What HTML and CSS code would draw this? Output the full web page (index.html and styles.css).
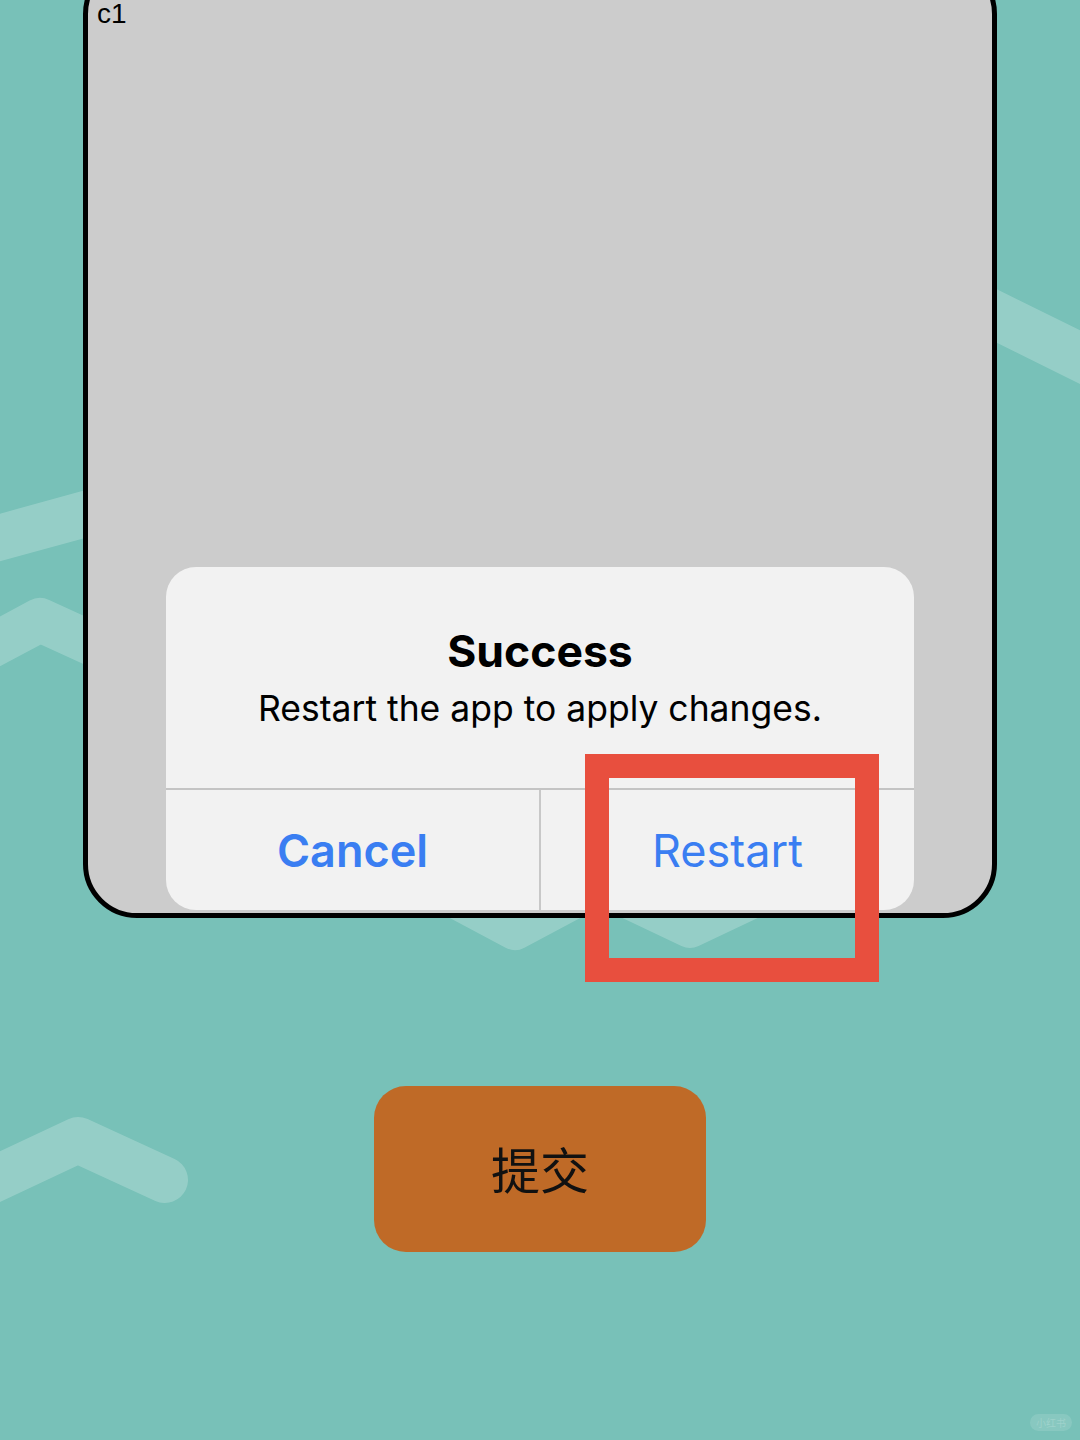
FILE: index.html
```html
<!DOCTYPE html>
<html lang="en">
<head>
  <meta charset="UTF-8">
  <title>Restart dialog</title>
  <link rel="stylesheet" href="styles.css">
</head>
<body>
  <svg class="bg" viewBox="0 0 1080 1440" width="1080" height="1440">
    <g fill="none" stroke="#ffffff" stroke-opacity="0.22" stroke-linecap="round" stroke-linejoin="round">
      <polyline points="900,268 1110,372" stroke-width="48"/>
      <polyline points="-20,543 100,510" stroke-width="46"/>
      <polyline points="-20,652 40,620 110,652" stroke-width="44"/>
      <polyline points="-20,1186 78,1140 165,1180" stroke-width="46"/>
      <polyline points="440,890 515,930 590,890" stroke-width="40"/>
      <polyline points="610,890 690,928 770,890" stroke-width="40"/>
    </g>
  </svg>

  <div class="page">
    <div class="phone">
      <span class="label">c1</span>
      <div class="alert">
        <div class="alert-body">
          <h2>Success</h2>
          <p>Restart the app to apply changes.</p>
        </div>
        <div class="alert-actions">
          <button class="cancel">Cancel</button>
          <button class="restart">Restart</button>
        </div>
      </div>
      <div class="highlight"></div>
    </div>

    <button class="submit">提交</button>
  </div>

  <div class="watermark">小红书</div>
</body>
</html>
```

FILE: styles.css
```css
body {
  margin: 0;
  height: 1440px;
  overflow: hidden;
  background-color: #78c1b8;
  font-family: Inter, "Liberation Sans", "Noto Sans CJK SC", sans-serif;
  position: relative;
}
.bg {
  position: absolute;
  top: 0;
  left: 0;
}
.page {
  position: relative;
  display: flex;
  flex-direction: column;
}
.phone {
  position: relative;
  box-sizing: border-box;
  width: 914px;
  height: 958px;
  margin: -40px 0 0 83px;
  border: 5px solid #000;
  border-radius: 54px;
  background: #cccccc;
  display: flex;
  flex-direction: column;
  justify-content: space-between;
}
.label {
  font-family: "Liberation Sans", sans-serif;
  font-size: 28px;
  line-height: 28px;
  color: #000;
  margin: 35px 0 0 9px;
}
.alert {
  height: 343px;
  margin: 0 78px 3px;
  background: #f2f2f2;
  border-radius: 30px;
  overflow: hidden;
  display: flex;
  flex-direction: column;
}
.alert-body {
  height: 221px;
  box-sizing: border-box;
  padding-top: 57px;
  text-align: center;
  color: #000;
}
.alert-body h2 {
  margin: 0;
  font-size: 44.5px;
  line-height: 54px;
  font-weight: 700;
}
.alert-body p {
  margin: 9px 0 0;
  font-size: 35.5px;
  line-height: 44px;
}
.alert-actions {
  flex: 1;
  display: flex;
  border-top: 2px solid #c4c4c4;
}
.alert-actions button {
  flex: 1;
  border: none;
  background: none;
  font-family: Inter, "Liberation Sans", sans-serif;
  font-size: 45px;
  color: #3a7ef2;
  padding: 0;
  cursor: pointer;
}
.alert-actions .cancel {
  font-weight: 600;
  border-right: 2px solid #c8c8c8;
}
.highlight {
  position: absolute;
  left: 497px;
  top: 789px;
  width: 294px;
  height: 228px;
  box-sizing: border-box;
  border: 24px solid #e84f3e;
}
.submit {
  align-self: center;
  margin-top: 168px;
  width: 332px;
  height: 166px;
  border: none;
  border-radius: 32px;
  background: #bf6a27;
  color: #111;
  font-family: "Noto Sans CJK SC", sans-serif;
  font-size: 49px;
  padding: 0 0 4px;
  cursor: pointer;
}
.watermark {
  position: absolute;
  right: 8px;
  bottom: 9px;
  padding: 1px 6px;
  border-radius: 9px;
  background: rgba(255, 255, 255, 0.12);
  color: rgba(255, 255, 255, 0.2);
  font-family: "Noto Sans CJK SC", sans-serif;
  font-size: 10px;
}
```
